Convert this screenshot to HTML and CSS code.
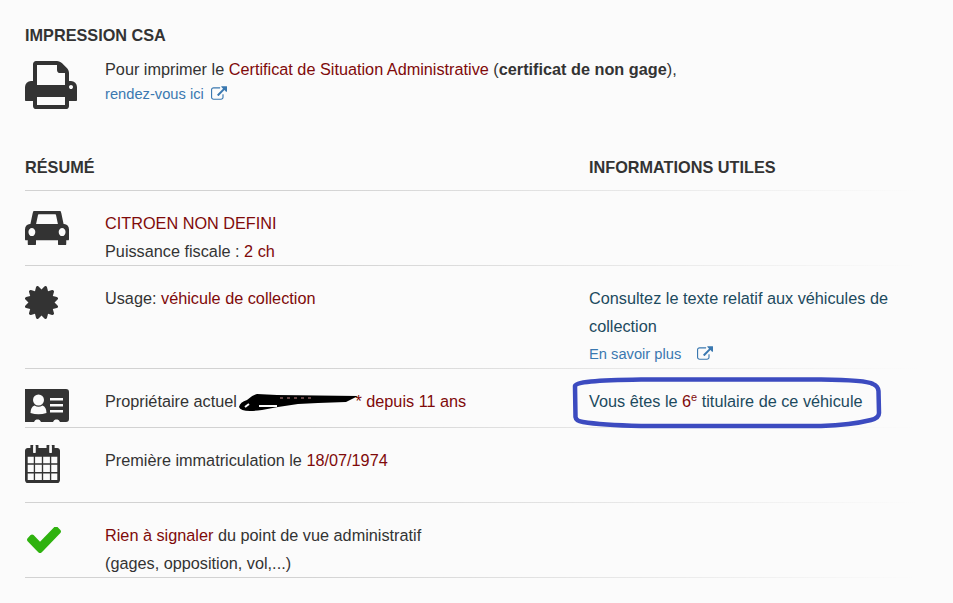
FILE: index.html
```html
<!DOCTYPE html>
<html lang="fr">
<head>
    <meta charset="UTF-8">
    <meta name="viewport" content="width=device-width, initial-scale=1.0">
    <title>Impression CSA</title>
    <link rel="stylesheet" href="styles.css">
</head>
<body>
    <div class="container">
        <h2 class="title">IMPRESSION CSA</h2>
        <div class="csa">
            <svg class="icon icon-print" viewBox="64 128 1664 1536" preserveAspectRatio="none"><path d="M448 1536h896v-256h-896v256zm0-640h896v-384h-160q-40 0-68-28t-28-68v-160h-640v640zm1152 64q0-26-19-45t-45-19-45 19-19 45 19 45 45 19 45-19 19-45zm128 0v416q0 13-9.5 22.5t-22.5 9.5h-224v160q0 40-28 68t-68 28h-960q-40 0-68-28t-28-68v-160h-224q-13 0-22.5-9.5t-9.5-22.5v-416q0-79 56.5-135.5t135.5-56.5h64v-544q0-40 28-68t68-28h672q40 0 88 20t76 48l152 152q28 28 48 76t20 88v256h64q79 0 135.5 56.5t56.5 135.5z"/></svg>
            <div class="csa-text">
                <p>Pour imprimer le <span class="val">Certificat de Situation Administrative</span> (<b>certificat de non gage</b>),</p>
                <a class="more" href="#">rendez-vous ici
                    <svg class="ext" viewBox="0 128 1792 1536"><path d="M1408 928v320q0 119-84.5 203.5t-203.5 84.5h-832q-119 0-203.5-84.5t-84.5-203.5v-832q0-119 84.5-203.5t203.5-84.5h704q14 0 23 9t9 23v64q0 14-9 23t-23 9h-704q-66 0-113 47t-47 113v832q0 66 47 113t113 47h832q66 0 113-47t47-113v-320q0-14 9-23t23-9h64q14 0 23 9t9 23zm384-864v512q0 26-19 45t-45 19-45-19l-176-176-652 652q-10 10-23 10t-23-10l-114-114q-10-10-10-23t10-23l652-652-176-176q-19-19-19-45t19-45 45-19h512q26 0 45 19t19 45z" transform="translate(0 128)"/></svg>
                </a>
            </div>
        </div>

        <div class="heads">
            <h2 class="title">RÉSUMÉ</h2>
            <h2 class="title">INFORMATIONS UTILES</h2>
        </div>

        <div class="row">
            <svg class="icon icon-car" viewBox="0 256 2048 1344" preserveAspectRatio="none"><path d="M480 1088q0-66-47-113t-113-47-113 47-47 113 47 113 113 47 113-47 47-113zm36-320h1016l-89-357q-2-8-14-17.5t-21-9.5h-768q-9 0-21 9.5t-14 17.5zm1372 320q0-66-47-113t-113-47-113 47-47 113 47 113 113 47 113-47 47-113zm160-96v384q0 14-9 23t-23 9h-96v128q0 80-56 136t-136 56-136-56-56-136v-128h-1024v128q0 80-56 136t-136 56-136-56-56-136v-128h-96q-14 0-23-9t-9-23v-384q0-93 65.5-158.5t158.5-65.5h28l105-419q23-94 104-157.5t179-63.5h768q98 0 179 63.5t104 157.5l105 419h28q93 0 158.5 65.5t65.5 158.5z"/></svg>
            <div class="cell">
                <p class="val">CITROEN NON DEFINI</p>
                <p>Puissance fiscale : <span class="val">2 ch</span></p>
            </div>
            <div class="info"></div>
        </div>

        <div class="row">
            <svg class="icon icon-usage" viewBox="128 128 1536 1536"><path d="M1504 896l138 135q30 28 20 70-12 41-52 51l-188 48 53 186q12 41-19 70-29 31-70 19l-186-53-48 188q-10 40-51 52-12 2-19 2-31 0-51-22l-135-138-135 138q-28 30-70 20-41-11-51-52l-48-188-186 53q-41 12-70-19-31-29-19-70l53-186-188-48q-40-10-52-51-10-42 20-70l138-135-138-135q-30-28-20-70 12-41 52-51l188-48-53-186q-12-41 19-70 29-31 70-19l186 53 48-188q10-41 51-51 41-12 70 19l135 139 135-139q29-30 70-19 41 10 51 51l48 188 186-53q41-12 70 19 31 29 19 70l-53 186 188 48q40 10 52 51 10 42-20 70z"/></svg>
            <div class="cell">
                <p>Usage: <span class="val">véhicule de collection</span></p>
            </div>
            <div class="info">
                <p>Consultez le texte relatif aux véhicules de collection</p>
                <a class="more more-tall" href="#">En savoir plus
                    <svg class="ext ext-wide" viewBox="0 128 1792 1536"><path d="M1408 928v320q0 119-84.5 203.5t-203.5 84.5h-832q-119 0-203.5-84.5t-84.5-203.5v-832q0-119 84.5-203.5t203.5-84.5h704q14 0 23 9t9 23v64q0 14-9 23t-23 9h-704q-66 0-113 47t-47 113v832q0 66 47 113t113 47h832q66 0 113-47t47-113v-320q0-14 9-23t23-9h64q14 0 23 9t9 23zm384-864v512q0 26-19 45t-45 19-45-19l-176-176-652 652q-10 10-23 10t-23-10l-114-114q-10-10-10-23t10-23l652-652-176-176q-19-19-19-45t19-45 45-19h512q26 0 45 19t19 45z" transform="translate(0 128)"/></svg>
                </a>
            </div>
        </div>

        <div class="row row-owner">
            <svg class="icon icon-card" viewBox="0 0 44 33"><path d="M3 0h38q3 0 3 3v27q0 3-3 3h-6q-1-2.500-2.500-2.500h-2q-1.500 0-2.500 2.500h-12q-1-2.500-2.500-2.500h-2q-1.500 0-2.500 2.500h-8q-3 0-3-3v-27q0-3 3-3z"/><circle class="card-mark" cx="13.500" cy="11" r="5.500"/><path class="card-mark" d="M5.500 24q0-6 4-7.500q4 2.500 8 0q4 1.500 4 7.500q-8 2.500-16 0z"/><path class="card-mark" d="M25 9h13v2.500h-13zM25 15h13v2.500h-13zM25 21h13v2.500h-13z"/></svg>
            <div class="cell">
                <p>Propriétaire actuel <span class="masked"><svg class="scribble" viewBox="0 0 122 20"><path d="M1 16q1-5 8-7q5-5 10-6l20 1 81 1-12 6-28 1-20 1-20 3-16 3q-21 3-23-3z"/><path class="scribble-gap" d="M7 16l4-3M21 15h18"/><path class="scribble-specks" d="M42 7h34"/></svg></span><span class="val">* depuis 11 ans</span></p>
            </div>
            <div class="info">
                <p class="ringed">Vous êtes le <span class="val">6<sup>e</sup></span> titulaire de ce véhicule</p>
                <svg class="ring" viewBox="0 0 311 52"><path d="M4 9Q4 6 20 4.500Q35 3 70 2.500L250 2.500Q295 3 302 7Q307 9 307.500 14L308 36Q308 41 300 43Q280 48 250 49L70 49Q30 48 12 45Q5 44 4.500 40Z"/></svg>
            </div>
        </div>

        <div class="row row-date">
            <svg class="icon icon-date" viewBox="64 128 1664 1664" preserveAspectRatio="none"><path fill-rule="evenodd" d="M192 1664h288v-288h-288v288zm352 0h320v-288h-320v288zm-352-352h288v-320h-288v320zm352 0h320v-320h-320v320zm-352-384h288v-288h-288v288zm736 736h320v-288h-320v288zm-384-736h320v-288h-320v288zm768 736h288v-288h-288v288zm-384-352h320v-320h-320v320zm-352-864v-288q0-13-9.500-22.500t-22.500-9.500h-64q-13 0-22.500 9.500t-9.500 22.500v288q0 13 9.500 22.500t22.500 9.500h64q13 0 22.500-9.500t9.500-22.500zm736 864h288v-320h-288v320zm-384-384h320v-288h-320v288zm384 0h288v-288h-288v288zm32-480v-288q0-13-9.500-22.500t-22.500-9.500h-64q-13 0-22.500 9.500t-9.500 22.500v288q0 13 9.500 22.500t22.500 9.500h64q13 0 22.500-9.500t9.500-22.500zm384-64v1280q0 52-38 90t-90 38h-1408q-52 0-90-38t-38-90v-1280q0-52 38-90t90-38h128v-96q0-66 47-113t113-47h64q66 0 113 47t47 113v96h384v-96q0-66 47-113t113-47h64q66 0 113 47t47 113v96h128q52 0 90 38t38 90z"/></svg>
            <div class="cell">
                <p>Première immatriculation le <span class="val">18/07/1974</span></p>
            </div>
            <div class="info"></div>
        </div>

        <div class="row">
            <svg class="icon icon-check" viewBox="121 366 1550 1152" preserveAspectRatio="none"><path d="M1671 566q0 40-28 68l-724 724-136 136q-28 28-68 28t-68-28l-136-136-362-362q-28-28-28-68t28-68l136-136q28-28 68-28t68 28l294 295 656-657q28-28 68-28t68 28l136 136q28 28 28 68z"/></svg>
            <div class="cell">
                <p><span class="val">Rien à signaler</span> du point de vue administratif</p>
                <p>(gages, opposition, vol,...)</p>
            </div>
            <div class="info"></div>
        </div>
    </div>
</body>
</html>
```

FILE: styles.css
```css
* {
    margin: 0;
    padding: 0;
    box-sizing: border-box;
}

body {
    font-family: "Liberation Sans", Arial, sans-serif;
    font-size: 16.25px;
    line-height: 28px;
    background: #fbfbfb;
    color: #333;
}

.container {
    width: 917px;
    padding: 21px 0 0 25px;
}

.title {
    font-size: 16.25px;
    font-weight: bold;
    line-height: 28px;
    color: #333;
}

.val {
    color: #7f0a0a;
}

.icon {
    display: block;
    fill: #333;
}

.csa {
    display: flex;
    padding-top: 6px;
}

.icon-print {
    width: 52px;
    height: 48px;
    margin: 6px 28px 0 0;
}

.more {
    display: block;
    color: #3a78b0;
    font-size: 14.7px;
    line-height: 20px;
    text-decoration: none;
}

.csa-text .more {
    margin-top: 1px;
}

.more-tall {
    line-height: 28px;
}

.ext {
    width: 16px;
    height: 14px;
    margin-left: 3px;
    fill: #3a78b0;
    vertical-align: -1px;
}

.ext-wide {
    margin-left: 12px;
}

.heads,
.row {
    border-bottom: 1px solid #ddd;
    border-image: linear-gradient(to right, #d2d2d2 30%, #e6e6e6 65%, #fbfbfb) 1;
}

.heads {
    display: grid;
    grid-template-columns: 564px 1fr;
    padding: 44px 0 9px;
}

.row {
    display: grid;
    grid-template-columns: 80px 484px 1fr;
    padding-top: 18px;
    min-height: 75px;
}

.row-owner {
    min-height: 59px;
}

.info {
    position: relative;
    color: #1c4a5e;
}

.icon-car {
    width: 44px;
    height: 34px;
    margin-top: 2px;
}

.icon-usage {
    width: 33px;
    height: 33px;
    margin-top: 2px;
}

.icon-card {
    width: 44px;
    height: 33px;
    margin-top: 2px;
}

.card-mark {
    fill: #fbfbfb;
}

.masked {
    position: relative;
    display: inline-block;
    width: 114px;
    height: 1px;
}

.scribble {
    position: absolute;
    left: -3px;
    top: -15px;
    width: 122px;
    height: 20px;
    fill: #000;
}

.scribble-gap {
    fill: none;
    stroke: #fbfbfb;
    stroke-width: 2;
}

.scribble-specks {
    fill: none;
    stroke: #c98a8a;
    stroke-width: 1;
    stroke-dasharray: 3 4;
}

.ring {
    position: absolute;
    left: -18px;
    top: -10px;
    width: 311px;
    height: 52px;
    fill: none;
    stroke: #3c4bc0;
    stroke-width: 4.5;
    pointer-events: none;
}

sup {
    font-size: 11px;
    line-height: 0;
}

.icon-date {
    width: 35px;
    height: 38px;
    margin-top: -1px;
}

.icon-check {
    width: 34px;
    height: 26px;
    margin: 6px 0 0 2px;
    fill: #2fb20f;
}
```
